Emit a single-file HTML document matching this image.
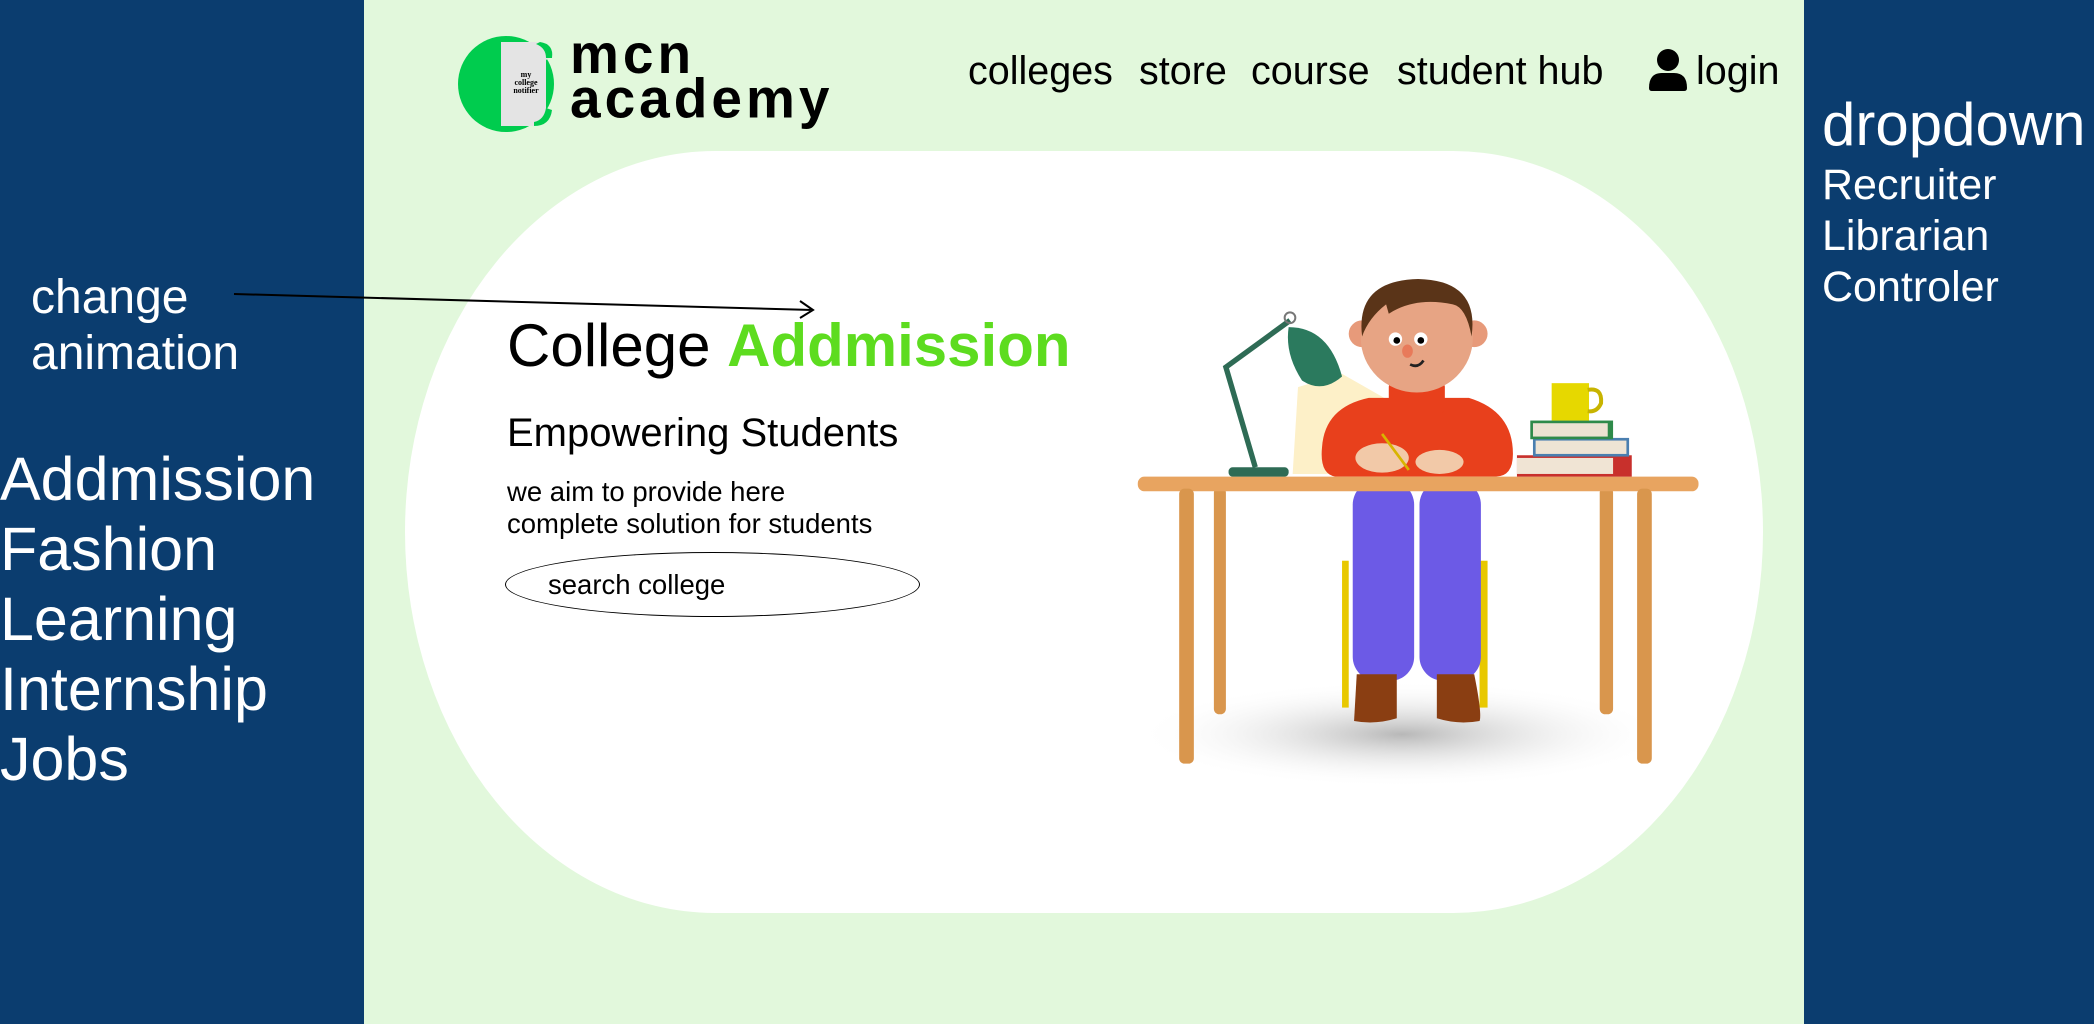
<!DOCTYPE html>
<html><head><meta charset="utf-8"><style>
*{margin:0;padding:0;box-sizing:border-box}
body{width:2094px;height:1024px;overflow:hidden;background:#e2f8dc;font-family:"Liberation Sans",sans-serif;position:relative}
.t{position:absolute;white-space:nowrap;line-height:1}
.nav{font-size:39.5px;color:#000;top:52px}
.w{color:#fff}
</style></head><body>
<div style="position:absolute;left:0;top:0;width:364px;height:1024px;background:#0b3d6f"></div>
<div style="position:absolute;left:1804px;top:0;width:290px;height:1024px;background:#0b3d6f"></div>
<div style="position:absolute;left:405px;top:151px;width:1358px;height:762px;background:#fff;border-radius:310px/381px"></div>

<!-- logo -->
<svg style="position:absolute;left:456px;top:36px" width="104" height="96" viewBox="0 0 104 96">
<circle cx="50" cy="48" r="48" fill="#00cc4e"/>
<path d="M45 6 L80 6 Q98 8 96 20 L90 24 L90 72 L96 76 Q92 90 78 90 L45 90 Z" fill="#e4e4e4"/>
<path d="M84 6 Q98 8 96 22 L90 22 Q90 12 80 8Z" fill="#00cc4e"/>
<path d="M90 72 L96 74 Q94 90 78 90 L78 86 Q88 84 90 72Z" fill="#00cc4e"/>
<text x="70" y="41" font-family="Liberation Serif" font-size="8" font-weight="bold" text-anchor="middle">my</text>
<text x="70" y="49" font-family="Liberation Serif" font-size="8" font-weight="bold" text-anchor="middle">college</text>
<text x="70" y="57" font-family="Liberation Serif" font-size="8" font-weight="bold" text-anchor="middle">notifier</text>
</svg>
<div class="t" style="left:570px;top:31px;font-size:55px;font-weight:bold;letter-spacing:4px;line-height:44px;transform:scaleY(1.02);transform-origin:top left">mcn<br>academy</div>

<div class="t nav" style="left:968px">colleges</div>
<div class="t nav" style="left:1139px">store</div>
<div class="t nav" style="left:1251px">course</div>
<div class="t nav" style="left:1397px">student hub</div>
<svg style="position:absolute;left:1648px;top:48px" width="40" height="44" viewBox="0 0 40 44"><circle cx="20" cy="12" r="11" fill="#000"/><path d="M1 40 Q1 25 14 25 L26 25 Q39 25 39 40 Q39 43 36 43 L4 43 Q1 43 1 40Z" fill="#000"/></svg>
<div class="t nav" style="left:1696px">login</div>

<div class="t w" style="left:1822px;top:95px;font-size:60px">dropdown</div>
<div class="t w" style="left:1822px;top:160px;font-size:43px;line-height:51px">Recruiter<br>Librarian<br>Controler</div>

<div class="t w" style="left:31px;top:270px;font-size:48px;line-height:56px">change<br>animation</div>
<div class="t w" style="left:0;top:444px;font-size:61px;line-height:70px">Addmission<br>Fashion<br>Learning<br>Internship<br>Jobs</div>

<svg style="position:absolute;left:0;top:0" width="2094" height="1024"><path d="M234 294 L813 310 M800 301 L813 310 L800 318" stroke="#000" stroke-width="2" fill="none"/></svg>

<div class="t" style="left:507px;top:316px;font-size:60px">College <b style="color:#5ddc1f">Addmission</b></div>
<div class="t" style="left:507px;top:413px;font-size:40px">Empowering Students</div>
<div class="t" style="left:507px;top:476px;font-size:27.5px;line-height:32px">we aim to provide here<br>complete solution for students</div>
<div style="position:absolute;left:505px;top:552px;width:415px;height:65px;border:1.5px solid #000;border-radius:50%"></div>
<div class="t" style="left:548px;top:571px;font-size:27.5px">search college</div>

<!-- illustration (screen coords) -->
<svg style="position:absolute;left:0;top:0" width="2094" height="1024" viewBox="0 0 1568 767">
<defs><radialGradient id="sh"><stop offset="0" stop-color="#888" stop-opacity=".6"/><stop offset="1" stop-color="#fff" stop-opacity="0"/></radialGradient></defs>
<ellipse cx="1050" cy="550" rx="200" ry="40" fill="url(#sh)"/>
<polygon points="972,290 1005,280 1040,300 1040,355 968,355" fill="#fdf0c8"/>
<rect x="1005" y="420" width="5" height="110" fill="#e8c800"/><rect x="1108" y="420" width="6" height="110" fill="#e8c800"/>
<rect x="1013" y="360" width="46" height="150" rx="18" fill="#6c5ae6"/>
<rect x="1063" y="360" width="46" height="150" rx="18" fill="#6c5ae6"/>
<path d="M1016 505 L1046 505 L1046 538 Q1030 543 1014 540Z" fill="#8a3e12"/>
<path d="M1076 505 L1104 505 Q1110 535 1108 540 Q1092 543 1076 538Z" fill="#8a3e12"/>
<rect x="909" y="365" width="9" height="170" rx="4" fill="#d9964d"/>
<rect x="1198" y="365" width="10" height="170" rx="4" fill="#d9964d"/>
<path d="M990 335 Q992 305 1025 298 L1100 298 Q1133 308 1133 340 Q1133 357 1120 357 L1000 357 Q988 355 990 335Z" fill="#e8401c"/>
<rect x="1040" y="285" width="42" height="25" rx="5" fill="#e8401c"/>
<ellipse cx="1035" cy="343" rx="20" ry="11" fill="#f2c9a8"/>
<ellipse cx="1078" cy="346" rx="18" ry="9" fill="#f2c9a8"/>
<line x1="1035" y1="325" x2="1055" y2="352" stroke="#d8b400" stroke-width="2"/>
<circle cx="1020" cy="250" r="10" fill="#e79a7a"/><circle cx="1104" cy="250" r="10" fill="#e79a7a"/>
<ellipse cx="1061" cy="253" rx="42" ry="41" fill="#e7a484"/>
<path d="M1020 252 Q1015 210 1062 209 Q1108 210 1102 252 Q1098 230 1088 228 Q1060 222 1040 235 L1038 228 Q1025 238 1020 252Z" fill="#5a3418"/>
<circle cx="1045" cy="254" r="5" fill="#fff"/><circle cx="1064" cy="254" r="5" fill="#fff"/>
<circle cx="1046" cy="255" r="2.5" fill="#000"/><circle cx="1064" cy="255" r="2.5" fill="#000"/>
<ellipse cx="1054" cy="263" rx="4" ry="5" fill="#e87a5a"/>
<path d="M1056 273 Q1062 276 1066 270" stroke="#222" stroke-width="2" fill="none"/>
<rect x="852" y="357" width="420" height="11" rx="5" fill="#e8a460"/>
<rect x="883" y="366" width="11" height="206" rx="4" fill="#d9964d"/>
<rect x="1226" y="366" width="11" height="206" rx="4" fill="#d9964d"/>
<rect x="920" y="350" width="45" height="7" rx="3" fill="#2e6b55"/>
<path d="M940 350 L918 275 L966 240" stroke="#2e6b55" stroke-width="4" fill="none"/>
<circle cx="966" cy="238" r="4" fill="none" stroke="#777" stroke-width="1.5"/>
<path d="M965 245 Q995 245 1005 282 Q990 295 975 285 Q962 265 965 245Z" fill="#2b7a5e"/>
<rect x="1136" y="341" width="86" height="16" fill="#c8302c"/><rect x="1136" y="343" width="72" height="12" fill="#f0e4d4"/>
<rect x="1148" y="328" width="72" height="14" fill="#4a7fb0"/><rect x="1150" y="330" width="68" height="10" fill="#eee4d4"/>
<rect x="1146" y="315" width="62" height="14" fill="#2e8a4a"/><rect x="1148" y="317" width="56" height="10" fill="#ece2d2"/>
<rect x="1162" y="287" width="28" height="28" fill="#e6d800"/>
<path d="M1189 292 Q1200 290 1199 302 Q1196 309 1189 308" stroke="#c8b400" stroke-width="3" fill="none"/>
</svg>
</body></html>
